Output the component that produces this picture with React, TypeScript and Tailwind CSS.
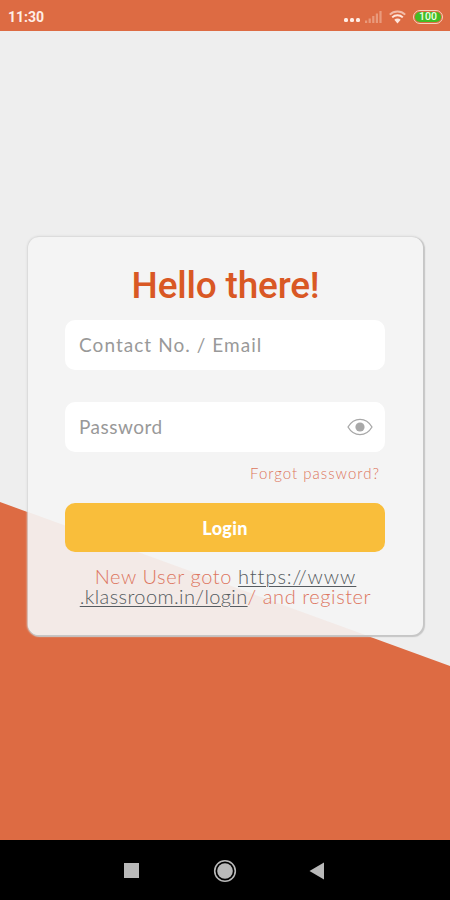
import React from "react";

const StatusBar: React.FC = () => {
    return (
    <div className="flex h-[31px] items-center justify-between bg-[#dd6b43] pl-2 pr-[7px] pt-[2px]">
      <span className="text-[14px] font-bold leading-none text-[#ffeee6] font-['Roboto',sans-serif]">11:30</span>
      <div className="flex items-center">
        {/* Notification dots */}
        <div className="mr-[5px] mt-[7px] flex gap-[2px]">
          <span className="size-[4px] rounded-[1.5px] bg-[#ffece4]" />
          <span className="size-[4px] rounded-[1.5px] bg-[#ffece4]" />
          <span className="size-[4px] rounded-[1.5px] bg-[#ffece4]" />
        </div>
        {/* Signal */}
        <svg width="17" height="14" viewBox="0 0 17 14" fill="#e99a7c" className="mr-[7px]">
          <rect x="0" y="10.5" width="2.2" height="2.5" />
          <rect x="3.6" y="8.5" width="2.2" height="4.5" />
          <rect x="7.2" y="6" width="2.2" height="7" />
          <rect x="10.8" y="3.5" width="2.2" height="9.5" />
          <rect x="14.4" y="1" width="2.2" height="12" />
        </svg>
        {/* Wifi */}
        <svg width="17" height="14" viewBox="0 0 17 14" fill="none" stroke="#ffe6dc" strokeWidth="2" className="mr-[7px]">
          <path d="M0.8 4.6a11 11 0 0 1 15.4 0" stroke="#f3bca8" />
          <path d="M3.2 7.4a7.5 7.5 0 0 1 10.6 0" />
          <path d="M5.3 9.8a4.4 4.4 0 0 1 6.4 0L8.5 13.5z" fill="#ffe6dc" stroke="none" />
        </svg>
        <div className="flex h-[14px] w-[30px] items-center justify-center rounded-full border-[1.5px] border-[#f6d4bd] bg-[#dd6b43] p-px">
          <span className="flex h-full w-full items-center justify-center rounded-full bg-[#43bd24] pt-px text-[10.5px] font-medium leading-none text-[#efffe7] font-['Roboto',sans-serif]">100</span>
        </div>
      </div>
    </div>
    );
};

const NavBar: React.FC = () => {
    return (
    <div className="flex h-[60px] items-center justify-between bg-black pl-[124px] pr-[125px] pt-px">
      <span className="size-[15px] bg-[#b9b9b9]" />
      <svg width="24" height="24" viewBox="0 0 24 24" className="ml-[2px]">
        <circle cx="12" cy="12" r="10.3" fill="none" stroke="#b9b9b9" strokeWidth="1.6" />
        <circle cx="12" cy="12" r="7.8" fill="#b9b9b9" />
      </svg>
      <svg width="16" height="18" viewBox="0 0 16 18">
        <path d="M15 0.5v17L0.5 9z" fill="#b9b9b9" />
      </svg>
    </div>
    );
};

const App: React.FC = () => {
    return (
    <div className="flex h-[900px] w-[450px] flex-col overflow-hidden">
      <StatusBar />
      <main className="relative flex-1 bg-[#eeeeee] pl-[28px] pt-[206px]">
        {/* Slanted background */}
        <div className="absolute inset-0 bg-[#dd6b43] [clip-path:polygon(0_471px,100%_635px,100%_100%,0_100%)]" />

        {/* Login card */}
        <div className="relative flex h-[398px] w-[395px] flex-col rounded-[11px] bg-[#f4f4f4] px-[37px] shadow-[1px_1px_1px_1px_#c6c6c6,0_0_2px_1px_#d8d8d8]">
          <div className="absolute inset-0 rounded-[11px] bg-[#f3eae7] [clip-path:polygon(0_275px,100%_419px,100%_100%,0_100%)]" />
          <div className="relative">
            <h1 className="mt-[26px] whitespace-nowrap text-center text-[37px] font-medium leading-[46px] tracking-[-0.2px] text-[#d95824] font-['Roboto',sans-serif]">Hello there!</h1>
            <form onSubmit={(e) => e.preventDefault()}>
              <input type="text" placeholder="Contact No. / Email" className="mt-[11px] block h-[50px] w-[320px] rounded-[10px] bg-white px-[14px] pb-[1px] text-[19px] tracking-[1.05px] text-[#777777] placeholder:text-[#999999] font-['Lato',sans-serif]" />
              <div className="mt-[32px] flex h-[50px] w-[320px] items-center rounded-[10px] bg-white px-[12px]">
                <input type="password" placeholder="Password" className="w-0 flex-1 bg-transparent pl-[2px] text-[19px] tracking-[0.5px] text-[#777777] placeholder:text-[#999999] font-['Lato',sans-serif]" />
                <svg width="26" height="18" viewBox="0 0 26 18" fill="none" stroke="#a8a8a8" strokeWidth="1.3">
                  <path d="M1 9C7-1.2 19-1.2 25 9C19 19.2 7 19.2 1 9z" />
                  <circle cx="13" cy="9" r="4.6" fill="#a8a8a8" stroke="none" />
                </svg>
              </div>
              <a href="#" className="mt-[12px] block h-[18px] pr-[6px] text-right text-[15px] font-light leading-[18px] tracking-[1px] text-[#dd765c] font-['Lato',sans-serif]">Forgot password?</a>
              <button type="submit" className="mt-[21px] block h-[49px] w-[320px] rounded-[10px] bg-[#f9be3b] pt-px text-[18px] font-black tracking-[0.3px] text-white font-['Lato',sans-serif]">Login</button>
            </form>
            <p className="mt-[14px] whitespace-nowrap text-center text-[20px] font-light leading-[20px] text-[#dd7660] font-['Lato',sans-serif]">
              <span className="tracking-[0.6px]">New User goto <span className="tracking-[0.95px] text-[#555b60] underline underline-offset-[2px] decoration-1">https://www</span></span>
              <br />
              <span className="tracking-[0.57px]"><span className="tracking-[0.4px] text-[#555b60] underline underline-offset-[2px] decoration-1">.klassroom.in/login</span>/ and register</span>
            </p>
          </div>
        </div>
      </main>
      <NavBar />
    </div>
    );
};

export default App;
